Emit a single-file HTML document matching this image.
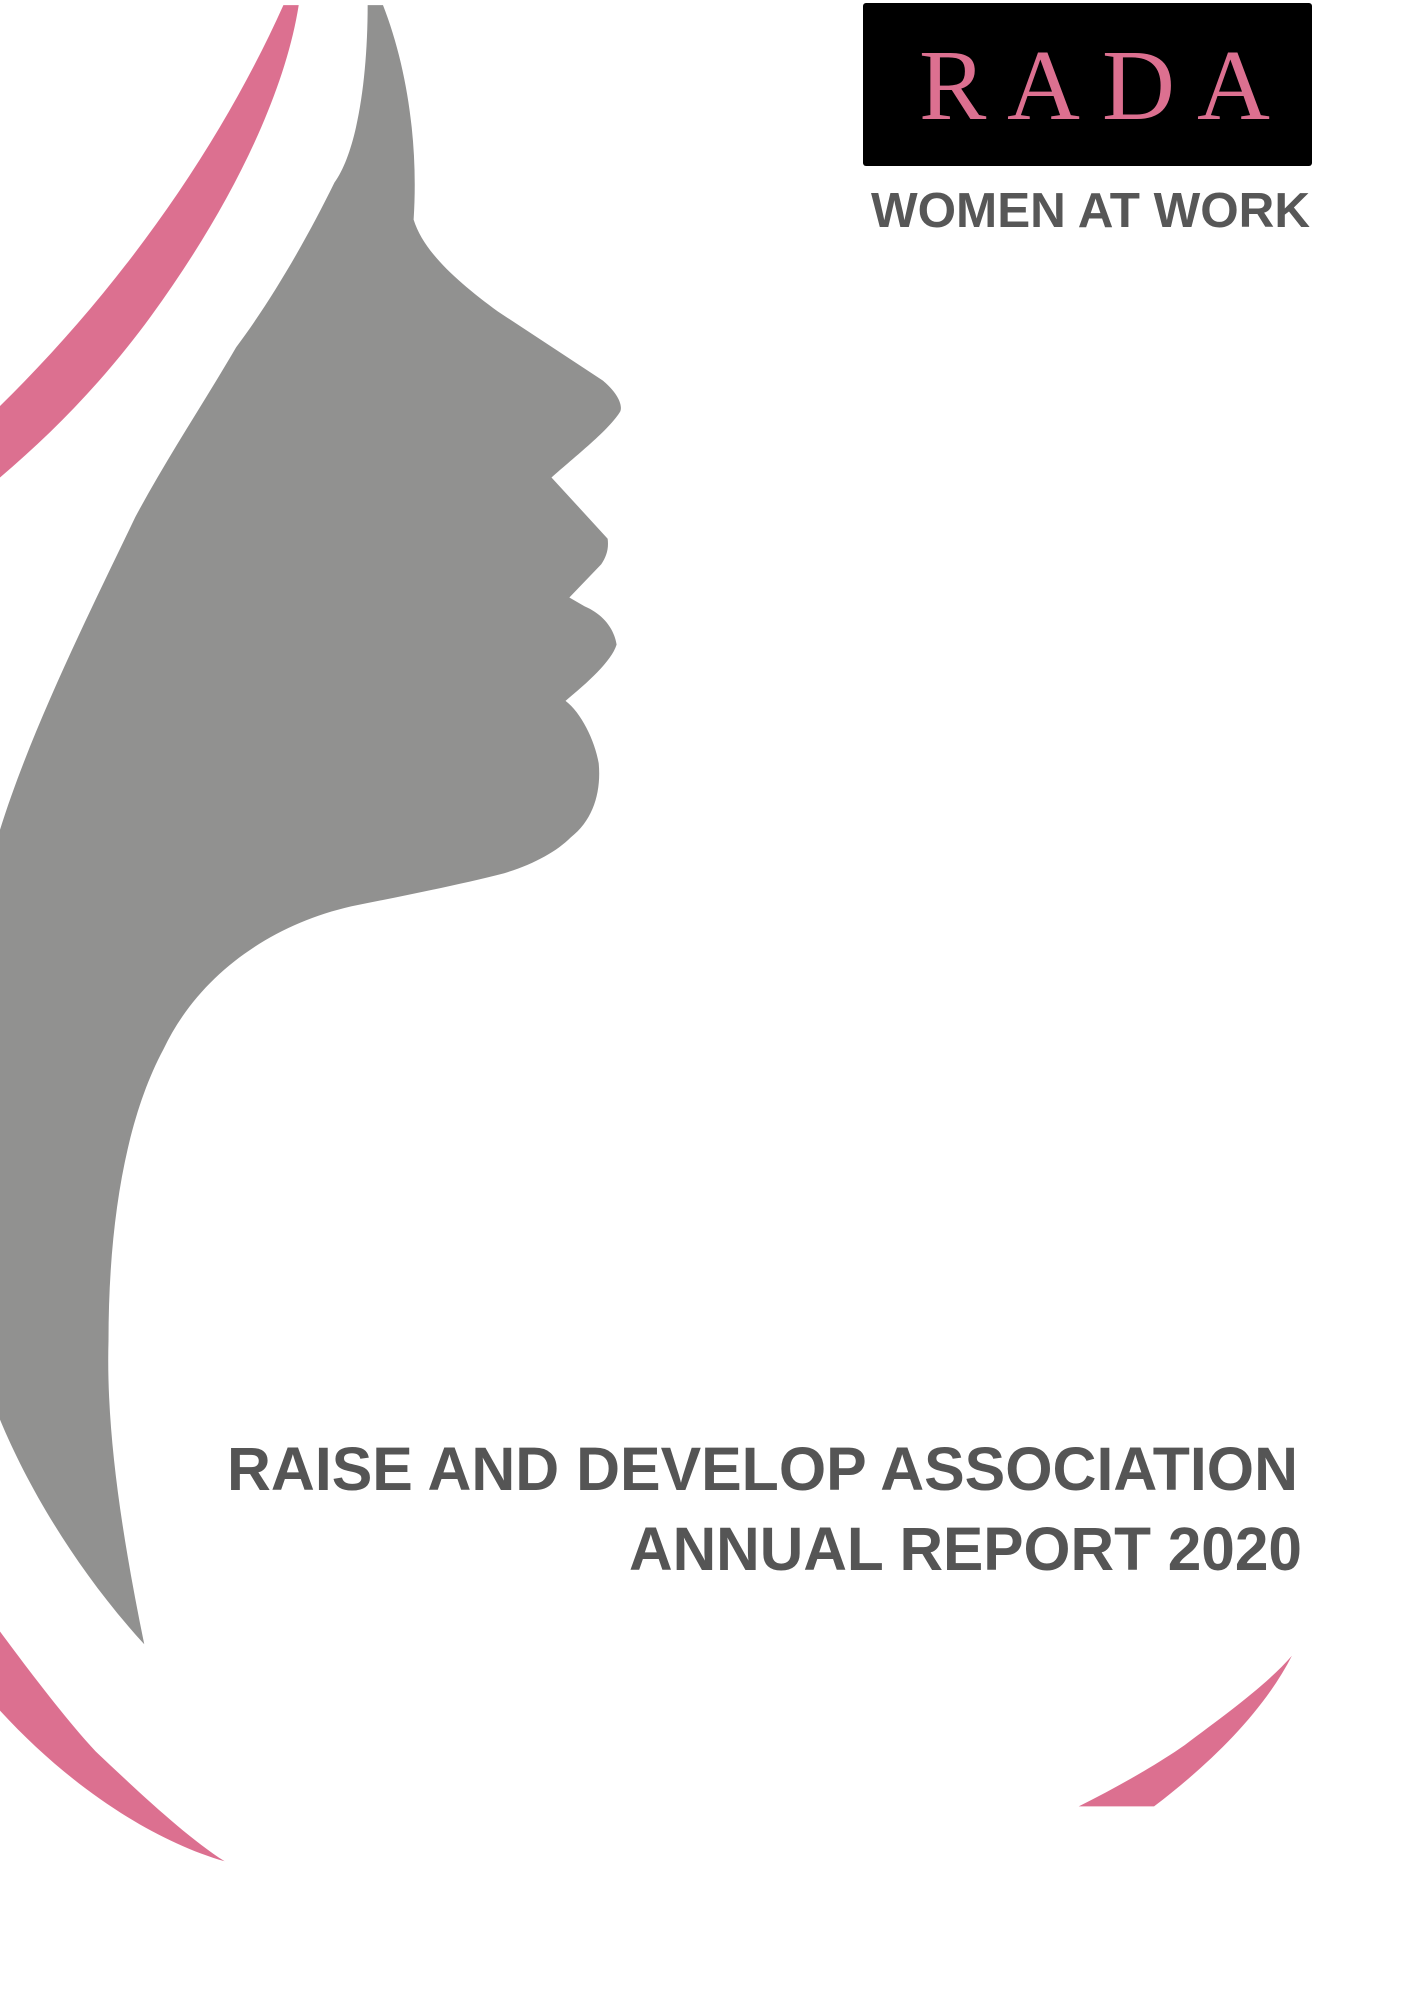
<!DOCTYPE html>
<html><head><meta charset="utf-8"><style>
html,body{margin:0;padding:0;background:#fff;}
svg{display:block;}
</style></head><body>
<svg width="1414" height="2000" viewBox="0 0 1414 2000" xmlns="http://www.w3.org/2000/svg">
<rect width="1414" height="2000" fill="#fff"/>
<g transform="scale(1.2766)">
<path fill="#919190" d="M288,4 L300,4 C318,50 328,110 324,172 C332,198 360,222 390,244 L472,298 C482,306 488,316 486,322 C478,336 450,358 432,374 L476,422 C477,430 475,436 471,442 L446,468 L458,475 C472,481 481,492 483,505 C479,518 460,535 443,549 C455,558 466,580 469,598 C471,620 465,642 447,656 C436,667 418,677 395,684 C360,693 315,702 275,710 C210,725 155,765 128,822 C98,878 85,960 85,1050 C83,1120 95,1200 113,1288 C60,1230 22,1165 0,1112 L0,650 C25,570 70,480 106,405 C130,360 160,315 185,272 C212,236 240,188 262,143 C280,118 288,60 288,4 Z"/>
<path fill="#dc7090" d="M222,4 L234,4 C222,80 175,170 118,248 C80,300 40,340 0,374 L0,318 C90,230 170,120 222,4 Z"/>
<path fill="#dc7090" d="M0,1278 C20,1305 50,1345 75,1372 C110,1405 145,1438 176,1458 C120,1442 55,1400 0,1340 Z"/>
<path fill="#dc7090" d="M1012,1297 C990,1340 950,1380 904,1415 L845,1415 C875,1400 905,1383 928,1367 C960,1343 992,1320 1012,1297 Z"/>
</g>
<rect x="863" y="3" width="449" height="163" rx="3" fill="#000"/>
<g font-family="'Liberation Serif',serif" font-size="101" fill="#dc7090">
<text x="919" y="119">R</text>
<text x="1007" y="119">A</text>
<text x="1102" y="119">D</text>
<text x="1197" y="119">A</text>
</g>
<text x="871" y="227" font-family="'Liberation Sans',sans-serif" font-weight="bold" font-size="49" fill="#575757" textLength="439" lengthAdjust="spacingAndGlyphs">WOMEN AT WORK</text>
<text x="227" y="1490" font-family="'Liberation Sans',sans-serif" font-weight="bold" font-size="61" fill="#555" textLength="1071" lengthAdjust="spacingAndGlyphs">RAISE AND DEVELOP ASSOCIATION</text>
<text x="629" y="1570" font-family="'Liberation Sans',sans-serif" font-weight="bold" font-size="61" fill="#555" textLength="673" lengthAdjust="spacingAndGlyphs">ANNUAL REPORT 2020</text>
</svg>
</body></html>
